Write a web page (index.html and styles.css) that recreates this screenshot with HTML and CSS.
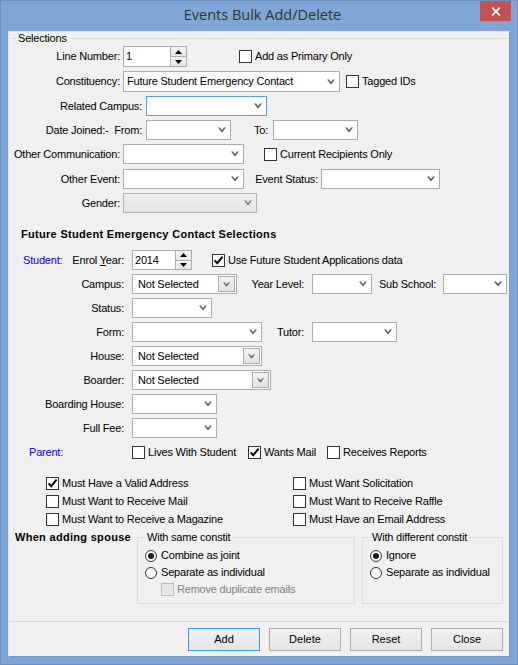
FILE: index.html
```html
<!DOCTYPE html>
<html>
<head>
<meta charset="utf-8">
<title>Events Bulk Add/Delete</title>
<link rel="stylesheet" href="styles.css">
</head>
<body>
<div class="window">
  <div class="titlebar">
    <div class="title">Events Bulk Add/Delete</div>
    <div class="close"><svg width="10" height="9" viewBox="0 0 10 9"><path d="M1.2 0.6 L8.8 8.4 M8.8 0.6 L1.2 8.4" stroke="#fff" stroke-width="1.7"/></svg></div>
  </div>
  <div class="client">
    <fieldset class="group selections">
      <legend>Selections</legend>
      <div class="rows">
        <div class="row h21">
          <span class="lab l110">Line Number:</span>
          <div class="spin w64"><span class="val">1</span><div class="btns"><span class="sb"><svg width="7" height="4" viewBox="0 0 7 4"><polygon points="0,4 3.5,0 7,4" fill="#000"/></svg></span><span class="sb"><svg width="7" height="4" viewBox="0 0 7 4"><polygon points="0,0 3.5,4 7,0" fill="#000"/></svg></span></div></div>
          <label class="chk ml52"><span class="cb"></span>Add as Primary Only</label>
        </div>
        <div class="row h21">
          <span class="lab l110">Constituency:</span>
          <div class="sel w217"><span class="txt">Future Student Emergency Contact</span><svg class="chev" width="8" height="6" viewBox="0 0 8 6"><path d="M0 0.5h2l2 2.6 2-2.6h2L4 5.5z" fill="#5e5e5e"/></svg></div>
          <label class="chk ml6"><span class="cb"></span>Tagged IDs</label>
        </div>
        <div class="row">
          <span class="lab l132">Related Campus:</span>
          <div class="sel w121 focus"><span class="txt"></span><svg class="chev" width="8" height="6" viewBox="0 0 8 6"><path d="M0 0.5h2l2 2.6 2-2.6h2L4 5.5z" fill="#5e5e5e"/></svg></div>
        </div>
        <div class="row">
          <span class="lab l132">Date Joined:-&nbsp; From:</span>
          <div class="sel w85"><span class="txt"></span><svg class="chev" width="8" height="6" viewBox="0 0 8 6"><path d="M0 0.5h2l2 2.6 2-2.6h2L4 5.5z" fill="#5e5e5e"/></svg></div>
          <span class="lab l37 mr5">To:</span>
          <div class="sel w85"><span class="txt"></span><svg class="chev" width="8" height="6" viewBox="0 0 8 6"><path d="M0 0.5h2l2 2.6 2-2.6h2L4 5.5z" fill="#5e5e5e"/></svg></div>
        </div>
        <div class="row">
          <span class="lab l110">Other Communication:</span>
          <div class="sel w121"><span class="txt"></span><svg class="chev" width="8" height="6" viewBox="0 0 8 6"><path d="M0 0.5h2l2 2.6 2-2.6h2L4 5.5z" fill="#5e5e5e"/></svg></div>
          <label class="chk ml20"><span class="cb"></span>Current Recipients Only</label>
        </div>
        <div class="row mt1">
          <span class="lab l110">Other Event:</span>
          <div class="sel w121"><span class="txt"></span><svg class="chev" width="8" height="6" viewBox="0 0 8 6"><path d="M0 0.5h2l2 2.6 2-2.6h2L4 5.5z" fill="#5e5e5e"/></svg></div>
          <span class="lab l74">Event Status:</span>
          <div class="sel w119"><span class="txt"></span><svg class="chev" width="8" height="6" viewBox="0 0 8 6"><path d="M0 0.5h2l2 2.6 2-2.6h2L4 5.5z" fill="#5e5e5e"/></svg></div>
        </div>
        <div class="row">
          <span class="lab l110">Gender:</span>
          <div class="sel w134 disabled"><span class="txt"></span><svg class="chev" width="8" height="6" viewBox="0 0 8 6"><path d="M0 0.5h2l2 2.6 2-2.6h2L4 5.5z" fill="#777"/></svg></div>
        </div>
      </div>
    </fieldset>

    <div class="sect">Future Student Emergency Contact Selections</div>

    <div class="rows student">
      <div class="row">
        <span class="lab l114 split"><span class="blue">Student:</span><span>Enrol <span class="u">Y</span>ear:</span></span>
        <div class="spin w60"><span class="val">2014</span><div class="btns"><span class="sb"><svg width="7" height="4" viewBox="0 0 7 4"><polygon points="0,4 3.5,0 7,4" fill="#000"/></svg></span><span class="sb"><svg width="7" height="4" viewBox="0 0 7 4"><polygon points="0,0 3.5,4 7,0" fill="#000"/></svg></span></div></div>
        <label class="chk ml20"><span class="cb"><svg width="11" height="11" viewBox="0 0 11 11"><path d="M1.6 5.4l2.6 2.8 5.4-6.6" fill="none" stroke="#000" stroke-width="1.9"/></svg></span>Use Future Student Applications data</label>
      </div>
      <div class="row">
        <span class="lab l114">Campus:</span>
        <div class="combo w105"><span class="txt">Not Selected</span><span class="cbtn"><svg width="7" height="5" viewBox="0 0 7 5"><path d="M0 0.4h1.8l1.7 2.2 1.7-2.2H7L3.5 4.8z" fill="#666"/></svg></span></div>
        <span class="lab l67 mr8">Year Level:</span>
        <div class="sel w60"><span class="txt"></span><svg class="chev" width="8" height="6" viewBox="0 0 8 6"><path d="M0 0.5h2l2 2.6 2-2.6h2L4 5.5z" fill="#5e5e5e"/></svg></div>
        <span class="lab l64 mr7">Sub School:</span>
        <div class="sel w64"><span class="txt"></span><svg class="chev" width="8" height="6" viewBox="0 0 8 6"><path d="M0 0.5h2l2 2.6 2-2.6h2L4 5.5z" fill="#5e5e5e"/></svg></div>
      </div>
      <div class="row">
        <span class="lab l114">Status:</span>
        <div class="sel w80"><span class="txt"></span><svg class="chev" width="8" height="6" viewBox="0 0 8 6"><path d="M0 0.5h2l2 2.6 2-2.6h2L4 5.5z" fill="#5e5e5e"/></svg></div>
      </div>
      <div class="row">
        <span class="lab l114">Form:</span>
        <div class="sel w130"><span class="txt"></span><svg class="chev" width="8" height="6" viewBox="0 0 8 6"><path d="M0 0.5h2l2 2.6 2-2.6h2L4 5.5z" fill="#5e5e5e"/></svg></div>
        <span class="lab l42 mr8">Tutor:</span>
        <div class="sel w85"><span class="txt"></span><svg class="chev" width="8" height="6" viewBox="0 0 8 6"><path d="M0 0.5h2l2 2.6 2-2.6h2L4 5.5z" fill="#5e5e5e"/></svg></div>
      </div>
      <div class="row">
        <span class="lab l114">House:</span>
        <div class="combo w130"><span class="txt">Not Selected</span><span class="cbtn"><svg width="7" height="5" viewBox="0 0 7 5"><path d="M0 0.4h1.8l1.7 2.2 1.7-2.2H7L3.5 4.8z" fill="#666"/></svg></span></div>
      </div>
      <div class="row">
        <span class="lab l114">Boarder:</span>
        <div class="combo w139"><span class="txt">Not Selected</span><span class="cbtn"><svg width="7" height="5" viewBox="0 0 7 5"><path d="M0 0.4h1.8l1.7 2.2 1.7-2.2H7L3.5 4.8z" fill="#666"/></svg></span></div>
      </div>
      <div class="row">
        <span class="lab l114">Boarding House:</span>
        <div class="sel w85"><span class="txt"></span><svg class="chev" width="8" height="6" viewBox="0 0 8 6"><path d="M0 0.5h2l2 2.6 2-2.6h2L4 5.5z" fill="#5e5e5e"/></svg></div>
      </div>
      <div class="row">
        <span class="lab l114">Full Fee:</span>
        <div class="sel w85"><span class="txt"></span><svg class="chev" width="8" height="6" viewBox="0 0 8 6"><path d="M0 0.5h2l2 2.6 2-2.6h2L4 5.5z" fill="#5e5e5e"/></svg></div>
      </div>
    </div>

    <div class="prow">
      <span class="plab blue">Parent:</span>
      <label class="chk pi1"><span class="cb"></span>Lives With Student</label>
      <label class="chk pi2"><span class="cb"><svg width="11" height="11" viewBox="0 0 11 11"><path d="M1.6 5.4l2.6 2.8 5.4-6.6" fill="none" stroke="#000" stroke-width="1.9"/></svg></span>Wants Mail</label>
      <label class="chk"><span class="cb"></span>Receives Reports</label>
    </div>

    <div class="checks">
      <label class="chk"><span class="cb"><svg width="11" height="11" viewBox="0 0 11 11"><path d="M1.6 5.4l2.6 2.8 5.4-6.6" fill="none" stroke="#000" stroke-width="1.9"/></svg></span>Must Have a Valid Address</label>
      <label class="chk"><span class="cb"></span>Must Want Solicitation</label>
      <label class="chk"><span class="cb"></span>Must Want to Receive Mail</label>
      <label class="chk"><span class="cb"></span>Must Want to Receive Raffle</label>
      <label class="chk"><span class="cb"></span>Must Want to Receive a Magazine</label>
      <label class="chk"><span class="cb"></span>Must Have an Email Address</label>
    </div>

    <div class="spouse">
      <div class="spouse-lab">When adding spouse</div>
      <fieldset class="sgroup g1">
        <legend>With same constit</legend>
        <div class="opt"><span class="rb on"></span>Combine as joint</div>
        <div class="opt"><span class="rb"></span>Separate as individual</div>
        <div class="opt sub dis"><span class="cb off"></span>Remove duplicate emails</div>
      </fieldset>
      <fieldset class="sgroup g2">
        <legend>With different constit</legend>
        <div class="opt"><span class="rb on"></span>Ignore</div>
        <div class="opt"><span class="rb"></span>Separate as individual</div>
      </fieldset>
    </div>

    <div class="sep"></div>

    <div class="btnrow">
      <button class="btn def">Add</button>
      <button class="btn">Delete</button>
      <button class="btn">Reset</button>
      <button class="btn">Close</button>
    </div>
  </div>
</div>
</body>
</html>
```

FILE: styles.css
```css
* { box-sizing: border-box; }
body { margin: 0; }

.window {
  width: 518px;
  height: 665px;
  background: #7fa6d6;
  padding: 0 8px 8px;
  display: flex;
  flex-direction: column;
  font-family: "Liberation Sans", Arial, sans-serif;
  font-size: 11px;
  line-height: 13px;
  color: #000;
  letter-spacing: -0.2px;
  box-shadow: inset 0 0 0 1px #6d91c3;
}

.titlebar {
  height: 31px;
  flex-shrink: 0;
  display: flex;
  align-items: flex-start;
}
.title {
  flex: 1;
  text-align: center;
  padding-left: 37px;
  font-family: "Open Sans", "Noto Sans", sans-serif;
  font-size: 14.5px;
  line-height: 30px;
  color: #333;
  letter-spacing: 0;
}
.close {
  width: 31px;
  height: 20px;
  margin-top: 1px;
  margin-right: -1px;
  background: #c75050;
  display: flex;
  align-items: center;
  justify-content: center;
}

.client {
  flex: 1;
  background: #f0f0f0;
  border: 1px solid #7895bd;
  border-top-color: #e4e4e4;
  border-left-color: #e4e4e4;
  padding-left: 1px;
  display: flex;
  flex-direction: column;
}

.group {
  margin: 0;
  padding: 0;
  border: none;
  border-top: 1px solid #dcdcdc;
  min-width: 0;
}
.group legend {
  padding: 0 2px;
  margin-left: 6px;
  line-height: 13px;
}

.rows {
  display: flex;
  flex-direction: column;
  gap: 4px;
  padding-top: 1px;
}
.rows.student { padding-top: 0; margin-top: 9px; }
.row {
  display: flex;
  align-items: center;
  height: 20px;
}
.row.h21 { height: 21px; }
.row.mt1 { margin-top: 1px; }

.lab {
  text-align: right;
  margin-right: 3px;
  white-space: nowrap;
  flex-shrink: 0;
}
.l110 { width: 110px; }
.l132 { width: 132px; margin-right: 4px; }
.l114 { width: 114px; margin-right: 8px; }
.l37 { width: 37px; }
.l74 { width: 74px; }
.l67 { width: 67px; }
.l64 { width: 64px; }
.l42 { width: 42px; }
.mr5 { margin-right: 5px; }
.mr7 { margin-right: 7px; }
.mr8 { margin-right: 8px; }
.split {
  display: flex;
  justify-content: space-between;
  padding-left: 13px;
}
.blue { color: #0000ff; }
.u { text-decoration: underline; }

.w60 { width: 60px; }
.w64 { width: 64px; }
.w80 { width: 80px; }
.w85 { width: 85px; }
.w105 { width: 105px; }
.w119 { width: 119px; }
.w121 { width: 121px; }
.w130 { width: 130px; }
.w134 { width: 134px; }
.w139 { width: 139px; }
.w217 { width: 217px; }

.sel {
  height: 100%;
  flex-shrink: 0;
  border: 1px solid #acacac;
  background: #fff;
  display: flex;
  align-items: center;
  padding-left: 3px;
}
.sel.focus { border-color: #569de5; }
.sel.disabled { background: linear-gradient(#efefef, #e4e4e4); border-color: #b3b3b3; }
.txt {
  flex: 1;
  white-space: nowrap;
  overflow: hidden;
}
.chev { margin-right: 4px; flex-shrink: 0; }

.combo {
  height: 100%;
  flex-shrink: 0;
  border: 1px solid #acacac;
  background: #fff;
  display: flex;
  align-items: center;
  padding: 1px 1px 1px 5px;
}
.cbtn {
  width: 17px;
  height: 100%;
  border: 1px solid #acacac;
  background: linear-gradient(#f2f2f2, #e2e2e2);
  display: flex;
  align-items: center;
  justify-content: center;
}

.spin {
  height: 100%;
  flex-shrink: 0;
  border: 1px solid #acacac;
  background: #fff;
  display: flex;
}
.spin .val {
  flex: 1;
  align-self: center;
  padding-left: 2px;
}
.spin .btns {
  width: 16px;
  display: flex;
  flex-direction: column;
  border-left: 1px solid #acacac;
}
.sb {
  flex: 1;
  display: flex;
  align-items: center;
  justify-content: center;
  background: linear-gradient(#f5f5f5, #e6e6e6);
}
.sb + .sb { border-top: 1px solid #acacac; }

.chk {
  display: flex;
  align-items: center;
  white-space: nowrap;
  height: 13px;
}
.ml6 { margin-left: 6px; }
.ml20 { margin-left: 20px; }
.ml52 { margin-left: 52px; }
.cb {
  width: 13px;
  height: 13px;
  flex-shrink: 0;
  border: 1px solid #333;
  background: #fff;
  margin-right: 3px;
  display: flex;
  align-items: center;
  justify-content: center;
}
.cb.off { border-color: #bcbcbc; background: #e6e6e6; }

.sect {
  font-weight: bold;
  margin-top: 15px;
  padding-left: 11px;
  letter-spacing: 0.3px;
}

.prow {
  display: flex;
  align-items: center;
  height: 13px;
  margin-top: 8px;
}
.plab { width: 122px; padding-left: 19px; flex-shrink: 0; }
.pi1 { width: 116px; }
.pi2 { width: 79px; }

.checks {
  display: grid;
  grid-template-columns: 247px auto;
  row-gap: 5px;
  padding-left: 36px;
  margin-top: 18px;
}

.spouse {
  display: flex;
  align-items: stretch;
  margin-top: 5px;
}
.spouse-lab {
  width: 127px;
  flex-shrink: 0;
  font-weight: bold;
  padding-left: 5px;
  letter-spacing: 0.3px;
}
.sgroup {
  margin: 0;
  border: 1px solid #d5dfe5;
  padding: 3px 0 5px 7px;
  min-width: 0;
}
.sgroup legend { padding: 0 2px; line-height: 13px; }
.g1 { width: 218px; }
.g2 { width: 141px; margin-left: 7px; }
.opt {
  height: 17px;
  display: flex;
  align-items: center;
  white-space: nowrap;
}
.opt.sub { padding-left: 16px; }
.opt.dis { color: #838383; }
.rb {
  width: 12px;
  height: 12px;
  flex-shrink: 0;
  border-radius: 50%;
  border: 1px solid #333;
  background: #fff;
  margin-right: 4px;
  display: flex;
  align-items: center;
  justify-content: center;
}
.rb.on::after {
  content: "";
  width: 6px;
  height: 6px;
  border-radius: 50%;
  background: #1c1c1c;
}

.sep {
  height: 1px;
  background: #d9d9d9;
  margin-top: 17px;
  margin-left: -1px;
}

.btnrow {
  display: flex;
  gap: 9px;
  padding-left: 178px;
  margin-top: 6px;
}
.btn {
  width: 72px;
  height: 23px;
  border: 1px solid #acacac;
  background: linear-gradient(#f0f0f0, #e5e5e5);
  font: inherit;
  color: #000;
  padding: 0;
  display: flex;
  align-items: center;
  justify-content: center;
}
.btn.def { border-color: #3399ff; }
```
